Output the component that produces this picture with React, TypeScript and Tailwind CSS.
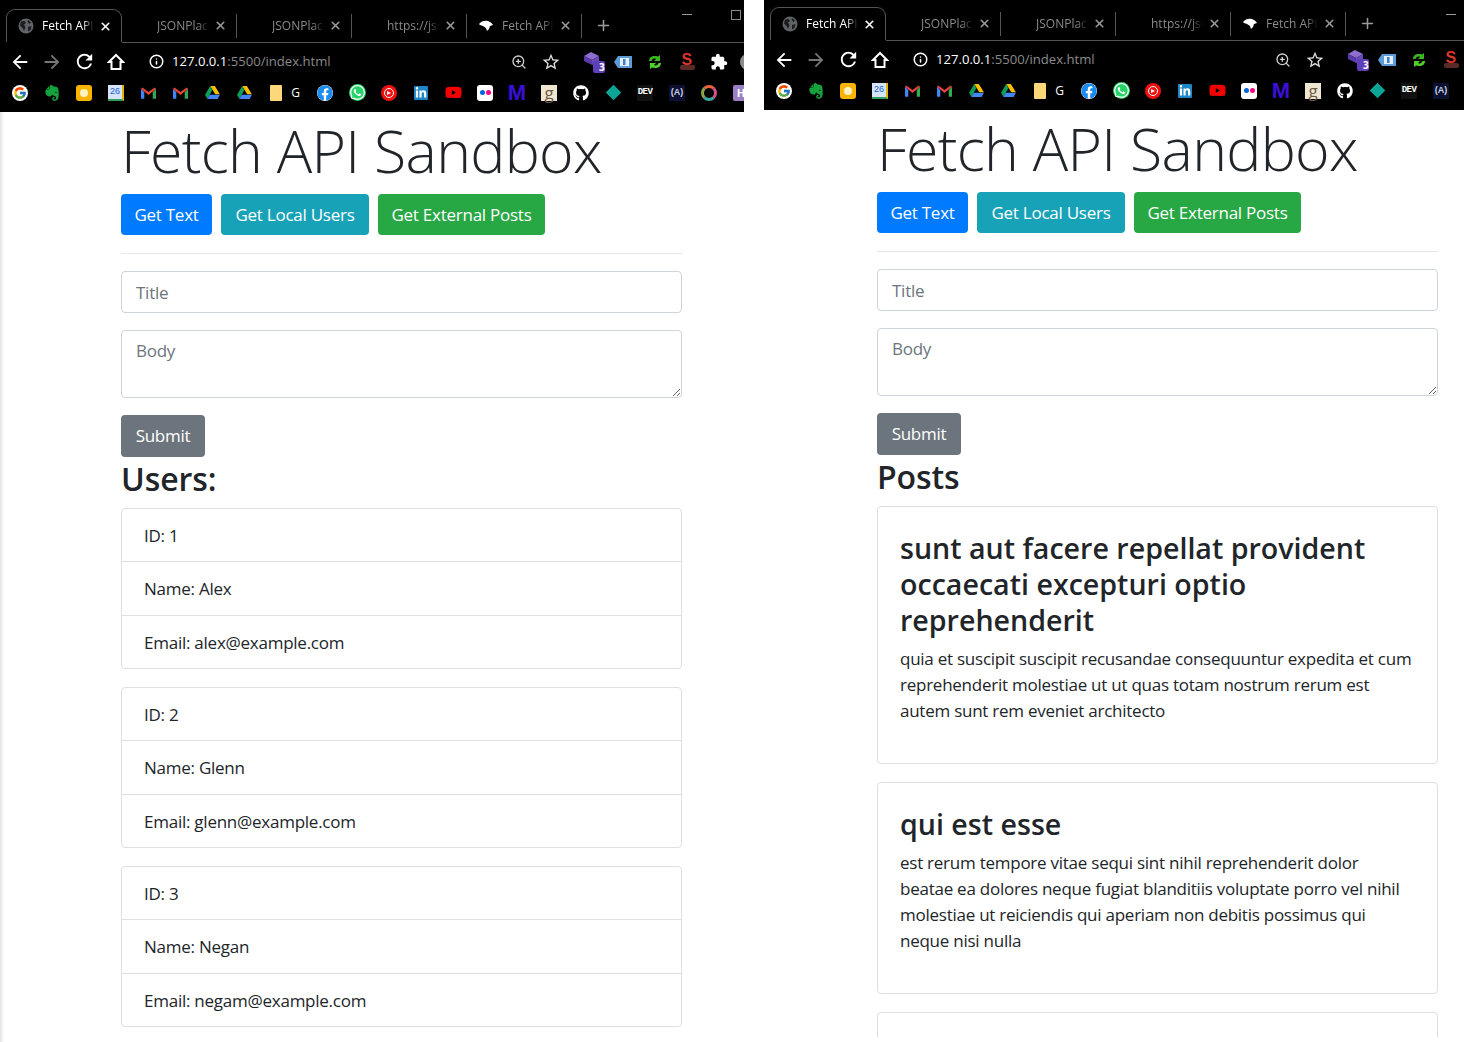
import { Info, Plus, X, ZoomIn } from "lucide-react";
import { FaEvernote, FaFacebook, FaGithub, FaLinkedinIn, FaWhatsapp, FaYoutube } from "react-icons/fa";
import { FcGoogle } from "react-icons/fc";
import { MdArrowBack, MdArrowForward, MdExtension, MdRefresh, MdStarBorder } from "react-icons/md";

const uiFont = "font-['Open_Sans','Liberation_Sans',sans-serif]";

const Globe = () => (
  <svg width="16" height="16" viewBox="0 0 16 16">
    <circle cx="8" cy="8" r="7.5" fill="#5f6368" />
    <path d="M3 3.5 6.5 3 8 5 6 6.5 7.5 9 6 13 4.5 10 2 7.5ZM10 2l3 2.500-1.500 1.500L9.500 4ZM10 9l3.500-1-1 4-2.500 1.500Z" fill="#1d1d1d" />
  </svg>
);

const Bird = () => (
  <svg width="14" height="12" viewBox="0 0 14 12">
    <path d="M0 4C2 1 6 0 9 1c2 .7 4 2 5 4l-3 1-1 3-2 2-1-3-3-2-3-1Z" fill="#fff" />
  </svg>
);

const HomeOutline = () => (
  <svg width="18" height="18" viewBox="0 0 18 18" fill="none" stroke="#fff" strokeWidth="2">
    <path d="M9 2 2 9h2.500v7h9V9H16Z" strokeLinejoin="miter" />
  </svg>
);

function Tab({ label, active, icon }: { label: string; active?: boolean; icon?: React.ReactNode }) {
  return (
    <div
      className={`flex h-[33px] shrink-0 items-center ${
        active ? "w-[116px] rounded-t-[9px] border border-b-0 border-[#555]" : "w-[115px]"
      }`}
    >
      <div className="flex w-[35px] shrink-0 justify-center pl-[3px]">{icon}</div>
      <span
        className={`w-[52px] shrink-0 overflow-hidden whitespace-nowrap text-[12px] [mask-image:linear-gradient(to_right,black_78%,transparent)] ${
          active ? "text-white" : "text-[#8a8a8a]"
        }`}
      >
        {label}
      </span>
      <X size={13} strokeWidth={3} className={`ml-[5px] shrink-0 ${active ? "text-white" : "text-[#9a9a9a]"}`} />
      {!active && <div className="ml-auto h-[24px] w-px bg-[#555]" />}
    </div>
  );
}

const Slot = ({ children, className = "" }: { children: React.ReactNode; className?: string }) => (
  <div className={`flex h-8 w-8 shrink-0 items-center justify-center ${className}`}>{children}</div>
);

const Cube = () => (
  <svg width="22" height="22" viewBox="0 0 22 22" className="ml-1">
    <path d="M0 5 7 1l8 4-7 4Z" fill="#8e6fd0" />
    <path d="M0 5v5l8 4V9Z" fill="#5a3aa8" />
    <path d="M15 5v5l-7 4V9Z" fill="#6c48bf" />
    <rect x="9" y="10" width="12" height="12" rx="2" fill="#5f3fb8" />
  </svg>
);

const TagB = () => (
  <svg width="18" height="12" viewBox="0 0 18 12">
    <path d="M0 6 4 0h14v12H4Z" fill="#5b9bd8" />
    <rect x="6" y="2" width="9" height="8" fill="#e4f0ff" />
    <rect x="9" y="3" width="2.500" height="6" fill="#3f7fc4" />
  </svg>
);

const Sync = () => (
  <svg width="16" height="16" viewBox="0 0 16 16">
    <path d="M2 7C2 3 6 1 11 2.500L13 1v6H7l2-2C7 4 5 5 4.500 7Z" fill="#3cb521" />
    <path d="M14 9c0 4-4 6-9 4.500L3 15V9h6l-2 2c2 1 4 0 4.500-2Z" fill="#4fd02a" />
  </svg>
);

const RedS = () => (
  <div className="relative h-[16px] w-[15px]">
    <span className="absolute -top-[3px] left-[2px] font-['Liberation_Sans',sans-serif] text-[16px] font-bold leading-[18px] text-[#d9352a]">S</span>
    <div className="absolute bottom-0 left-0 h-[5px] w-[15px] rounded-[2px] bg-[#5a2a26]" />
  </div>
);

const Gmail = () => (
  <svg width="15" height="12" viewBox="0 0 16 12">
    <path d="M0 1.500V12h3.500V5Z" fill="#4285f4" />
    <path d="M16 1.500V12h-3.500V5Z" fill="#34a853" />
    <path d="M0 1.500 1.500 0 8 5l6.500-5L16 1.500 8 8Z" fill="#ea4335" />
  </svg>
);

const Drive = () => (
  <svg width="15" height="13" viewBox="0 0 16 14">
    <path d="M5.500 0h5L16 9h-5Z" fill="#fbbc04" />
    <path d="M5.500 0 0 9.500 2.500 14l5.300-9.300Z" fill="#0f9d58" />
    <path d="M2.500 14h11L16 9.500H5Z" fill="#4285f4" />
  </svg>
);

const Bm = ({ children, className = "w-8" }: { children: React.ReactNode; className?: string }) => (
  <div className={`flex h-4 shrink-0 items-center justify-center ${className}`}>{children}</div>
);

function Bookmarks() {
  return (
    <div className="flex h-[25px] items-center pl-1">
      <Bm>
        <span className="flex h-4 w-4 items-center justify-center rounded-full bg-white"><FcGoogle size={14} /></span>
      </Bm>
      <Bm><FaEvernote size={18} color="#14a33c" /></Bm>
      <Bm>
        <span className="flex h-4 w-4 items-center justify-center rounded-[3px] bg-[#fbb400]">
          <span className="h-2 w-2 rounded-full bg-[#fff3c4]" />
        </span>
      </Bm>
      <Bm>
        <span className="flex h-4 w-4 items-center justify-center border-r-2 border-b-2 border-r-[#e6b400] border-b-[#2f9e5a] bg-[#d5e4fb] font-['Liberation_Sans',sans-serif] text-[9px] leading-none text-[#1a5fd0]">26</span>
      </Bm>
      <Bm><Gmail /></Bm>
      <Bm><Gmail /></Bm>
      <Bm><Drive /></Bm>
      <Bm><Drive /></Bm>
      <Bm className="w-[22px] justify-end">
        <span className="h-4 w-[12px] rounded-[1px] bg-[#fdd87a]" />
      </Bm>
      <Bm className="w-[27px]"><span className="text-[12px] text-white">G</span></Bm>
      <Bm><FaFacebook size={16} color="#1a8cf0" className="rounded-full bg-white" /></Bm>
      <Bm><FaWhatsapp size={17} color="#fff" className="rounded-full bg-[#25d366]" /></Bm>
      <Bm>
        <span className="flex h-4 w-4 items-center justify-center rounded-full bg-[#f01010]">
          <span className="flex h-[10px] w-[10px] items-center justify-center rounded-full border border-white">
            <span className="h-0 w-0 border-y-[2.500px] border-l-[4px] border-y-transparent border-l-white" />
          </span>
        </span>
      </Bm>
      <Bm>
        <span className="flex h-[14px] w-[14px] items-center justify-center rounded-[1px] bg-[#1c86c8]"><FaLinkedinIn size={12} color="#fff" /></span>
      </Bm>
      <Bm><FaYoutube size={17} color="#f40000" /></Bm>
      <Bm>
        <span className="flex h-4 w-4 items-center justify-center gap-px rounded-[3px] bg-white">
          <span className="h-[5px] w-[5px] rounded-full bg-[#0063dc]" />
          <span className="h-[5px] w-[5px] rounded-full bg-[#ff0084]" />
        </span>
      </Bm>
      <Bm>
        <span className="font-['Liberation_Sans',sans-serif] text-[22px] font-bold leading-none text-[#3a10d8]">M</span>
      </Bm>
      <Bm>
        <span className="flex h-4 w-4 items-center justify-center bg-[#efe6d2] font-['Open_Sans',sans-serif] text-[17px] leading-[14px] text-[#6b5a48]">g</span>
      </Bm>
      <Bm><FaGithub size={16} color="#fff" /></Bm>
      <Bm><span className="h-[11px] w-[11px] rotate-45 bg-[#0aa597]" /></Bm>
      <Bm>
        <span className="flex h-4 w-4 items-center justify-center bg-[#111] font-['Liberation_Mono',monospace] text-[9px] font-bold leading-none tracking-[-0.5px] text-white">DEV</span>
      </Bm>
      <Bm>
        <span className="flex h-4 w-4 items-center justify-center bg-[#0d1030] font-['Liberation_Sans',sans-serif] text-[9px] font-bold leading-none text-[#c8d0e8]">(A)</span>
      </Bm>
      <Bm>
        <span className="h-4 w-4 rounded-full border-[3px] border-t-[#e8663c] border-r-[#d84f8c] border-b-[#3aa8a0] border-l-[#8aa84a]" />
      </Bm>
      <Bm>
        <span className="flex h-4 w-4 items-center justify-center rounded-[2px] bg-[#9b7fc4] text-[11px] font-bold leading-none text-white">H</span>
      </Bm>
    </div>
  );
}

function BrowserChrome({ side }: { side: "left" | "right" }) {
  return (
    <header className={`${side === "left" ? "h-[112px] pt-[9px]" : "h-[110px] pt-[7px]"} relative shrink-0 overflow-hidden bg-black ${uiFont}`}>
      <div className="flex h-[33px] items-start pl-[6px]">
        <Tab label="Fetch API" active icon={<Globe />} />
        <Tab label="JSONPlaceholder" />
        <Tab label="JSONPlaceholder" />
        <Tab label="https://jsonplaceholder" />
        <Tab label="Fetch API" icon={<Bird />} />
        <Plus size={17} strokeWidth={2.2} className="ml-[13px] mt-2 shrink-0 text-[#9a9a9a]" />
      </div>
      <div className="absolute left-[682px] top-[14px] h-px w-[10px] bg-[#9a9a9a]" />
      {side === "left" && <div className="absolute left-[731px] top-[10px] h-[10px] w-[10px] border border-[#8a8a8a]" />}
      <div className="ml-[122px] h-px bg-[#555]" />
      <div className="flex h-[37px] items-center pl-1">
        <Slot><MdArrowBack size={22} color="#fff" /></Slot>
        <Slot><MdArrowForward size={22} color="#777" /></Slot>
        <Slot><MdRefresh size={23} color="#fff" /></Slot>
        <Slot><HomeOutline /></Slot>
        <Slot className="ml-2"><Info size={15} strokeWidth={2.4} className="text-white" /></Slot>
        <div className="w-[331px] shrink-0 whitespace-nowrap text-[13.100px] text-[#8a8a8a]">
          <span className="text-white">127.0.0.1</span>:5500/index.html
        </div>
        <Slot><ZoomIn size={16} strokeWidth={2} className="text-[#cfcfcf]" /></Slot>
        <Slot><MdStarBorder size={20} color="#e0e0e0" /></Slot>
        <Slot className="relative ml-[10px]"><Cube /><span className="absolute left-[22px] top-[15px] text-[10px] font-bold leading-[12px] text-white">3</span></Slot>
        <Slot className="-ml-[2px]"><TagB /></Slot>
        <Slot><Sync /></Slot>
        <Slot><RedS /></Slot>
        <Slot><MdExtension size={18} color="#fff" /></Slot>
        <div className="ml-[5px] h-[16px] w-[16px] shrink-0 rounded-full bg-[#8d8d8d]" />
      </div>
      <Bookmarks />
    </header>
  );
}

function SandboxForm({ heading }: { heading: string }) {
  return (
    <>
      <h1 className="mb-2 h-[74px] whitespace-nowrap text-[59px] font-light leading-[76px] tracking-[-0.7px] text-[#212529]">Fetch API Sandbox</h1>
      <div className="flex gap-[9px]">
        <button className="h-[41px] w-[91px] rounded-[4px] bg-[#007bff] text-[17px] tracking-[-0.25px] text-white">Get Text</button>
        <button className="h-[41px] w-[148px] rounded-[4px] bg-[#17a2b8] text-[17px] tracking-[-0.25px] text-white">Get Local Users</button>
        <button className="h-[41px] w-[167px] rounded-[4px] bg-[#28a745] text-[17px] tracking-[-0.25px] text-white">Get External Posts</button>
      </div>
      <hr className="mt-[18px] mb-[17px] border-[#e6e6e6]" />
      <input
        placeholder="Title"
        className="block h-[42px] w-full rounded-[4px] border border-[#ced4da] px-[14px] text-[17px] tracking-[-0.25px] placeholder:text-[#6c757d]"
      />
      <textarea
        placeholder="Body"
        className="mt-[17px] block h-[68px] w-full rounded-[4px] border border-[#ced4da] px-[14px] py-[7px] text-[17px] tracking-[-0.25px] placeholder:text-[#6c757d]"
      />
      <button className="mt-[17px] block h-[42px] w-[84px] rounded-[4px] bg-[#6c757d] text-[17px] tracking-[-0.25px] text-white">Submit</button>
      <h2 className="mb-[9px] h-[42px] text-[32px] font-semibold leading-[44px] tracking-[-0.1px] text-[#212529]">{heading}</h2>
    </>
  );
}

const users = [
  { id: 1, name: "Alex", email: "alex@example.com" },
  { id: 2, name: "Glenn", email: "glenn@example.com" },
  { id: 3, name: "Negan", email: "negam@example.com" },
];

const posts = [
  {
    title: "sunt aut facere repellat provident occaecati excepturi optio reprehenderit",
    body: "quia et suscipit suscipit recusandae consequuntur expedita et cum reprehenderit molestiae ut ut quas totam nostrum rerum est autem sunt rem eveniet architecto",
  },
  {
    title: "qui est esse",
    body: "est rerum tempore vitae sequi sint nihil reprehenderit dolor beatae ea dolores neque fugiat blanditiis voluptate porro vel nihil molestiae ut reiciendis qui aperiam non debitis possimus qui neque nisi nulla",
  },
];

export default function App() {
  return (
    <div className={`flex h-[1042px] w-[1464px] overflow-hidden bg-white ${uiFont}`}>
      <section className="flex w-[744px] shrink-0 flex-col overflow-hidden">
        <BrowserChrome side="left" />
        <main className="flex-1 bg-linear-to-r from-[#e4e4e4] to-white to-[4px] pl-[121px] pr-[62px]">
          <SandboxForm heading="Users:" />
          {users.map((user) => (
            <ul key={user.id} className="mb-[18px] rounded-[4px] border border-[#dfdfdf] text-[17px] leading-[26px] tracking-[-0.25px] text-[#212529]">
              <li className="h-[53px] border-b border-[#dfdfdf] px-[22px] pt-[14px]">ID: {user.id}</li>
              <li className="h-[54px] border-b border-[#dfdfdf] px-[22px] pt-[14px]">Name: {user.name}</li>
              <li className="h-[52px] px-[22px] pt-[14px]">Email: {user.email}</li>
            </ul>
          ))}
        </main>
      </section>

      <section className="ml-5 flex h-[1037px] w-[700px] shrink-0 flex-col overflow-hidden">
        <BrowserChrome side="right" />
        <main className="flex-1 pl-[113px] pr-[26px]">
          <SandboxForm heading="Posts" />
          {posts.map((post) => (
            <div key={post.title} className="mb-[18px] rounded-[4px] border border-[#dfdfdf] px-[22px] pt-[23px] pb-[39px]">
              <h3 className="mb-2 text-[28.600px] font-semibold leading-[36px] text-[#212529]">{post.title}</h3>
              <p className="text-[17px] leading-[26px] tracking-[-0.25px] text-[#212529]">{post.body}</p>
            </div>
          ))}
          <div className="h-[60px] rounded-[4px] border border-[#dfdfdf]" />
        </main>
      </section>
    </div>
  );
}
